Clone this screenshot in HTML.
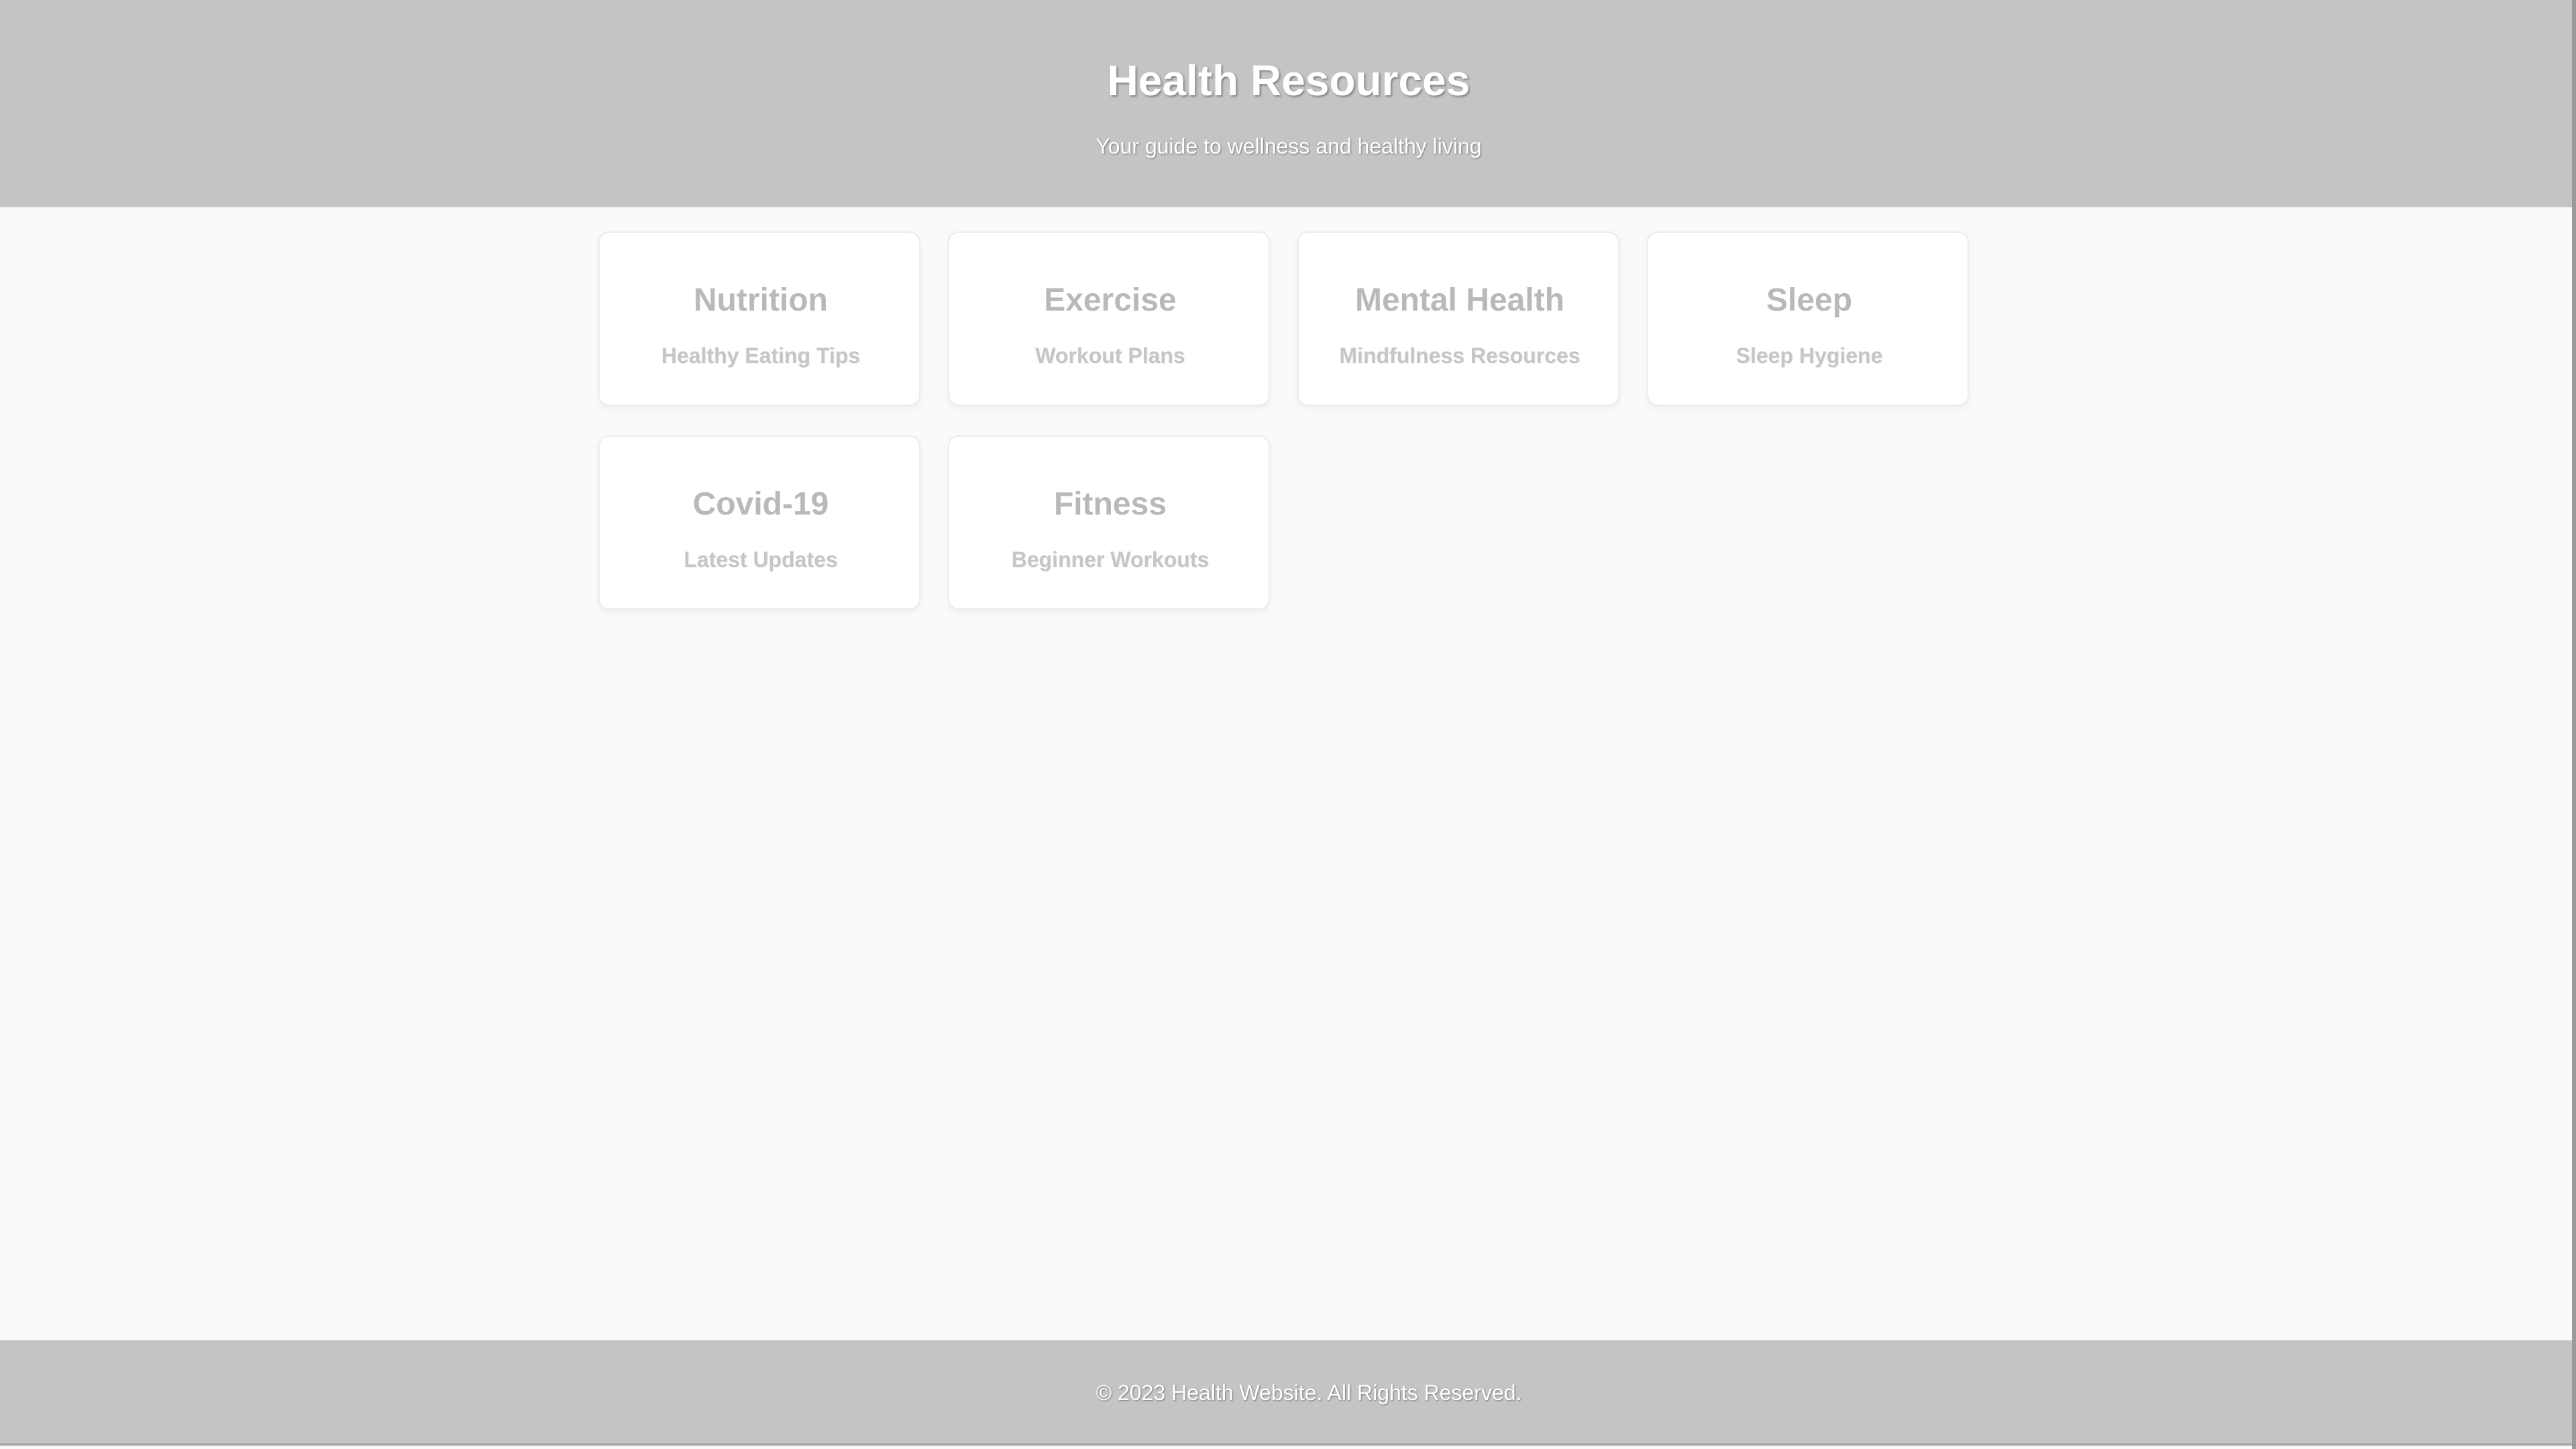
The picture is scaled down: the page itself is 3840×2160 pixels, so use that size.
<!DOCTYPE html>
<html><head><meta charset="utf-8"><style>
*{margin:0;padding:0;box-sizing:border-box}
html,body{width:3840px;height:2160px;overflow:hidden;background:#fafafa;font-family:"Liberation Sans",Arial,sans-serif}
header{position:absolute;left:0;top:0;width:3834px;height:309px;background:#c4c4c4;text-align:center;color:#fff}
header h1{position:absolute;left:8px;right:0;top:80px;font-size:64px;font-weight:bold;text-shadow:2px 2px 3px rgba(0,0,0,.35);line-height:80px}
header p{position:absolute;left:8px;right:0;top:198px;font-size:32px;text-shadow:1px 1px 2px rgba(0,0,0,.4);line-height:40px}
.card{position:absolute;width:480px;height:260px;background:#fff;border:2px solid #ececec;border-radius:16px;box-shadow:0 4px 10px rgba(0,0,0,.05);text-align:center}
.card h2{position:absolute;left:4px;right:0;top:73px;font-size:48px;font-weight:bold;color:#b9b9b9;line-height:56px}
.card p{position:absolute;left:4px;right:0;top:163px;font-size:32px;font-weight:bold;color:#c6c6c6;line-height:40px;text-shadow:1px 1px 1px rgba(0,0,0,.08)}
footer{position:absolute;left:0;top:1998px;width:3834px;height:157px;background:#c4c4c4;border-bottom:4px solid #aaa;text-align:center;color:#fff;font-size:32px;line-height:157px;padding-left:68px;text-shadow:1px 1px 2px rgba(0,0,0,.4)}
.sb{position:absolute;left:3834px;top:0;width:6px;height:2160px;background:#9a9a9a}
</style></head><body>
<header><h1>Health Resources</h1><p>Your guide to wellness and healthy living</p></header>
<div class="card" style="left:892px;top:345px"><h2>Nutrition</h2><p>Healthy Eating Tips</p></div>
<div class="card" style="left:1413px;top:345px"><h2>Exercise</h2><p>Workout Plans</p></div>
<div class="card" style="left:1934px;top:345px"><h2>Mental Health</h2><p>Mindfulness Resources</p></div>
<div class="card" style="left:2455px;top:345px"><h2>Sleep</h2><p>Sleep Hygiene</p></div>
<div class="card" style="left:892px;top:649px"><h2>Covid-19</h2><p>Latest Updates</p></div>
<div class="card" style="left:1413px;top:649px"><h2>Fitness</h2><p>Beginner Workouts</p></div>
<footer>© 2023 Health Website. All Rights Reserved.</footer>
<div class="sb"></div>
</body></html>
